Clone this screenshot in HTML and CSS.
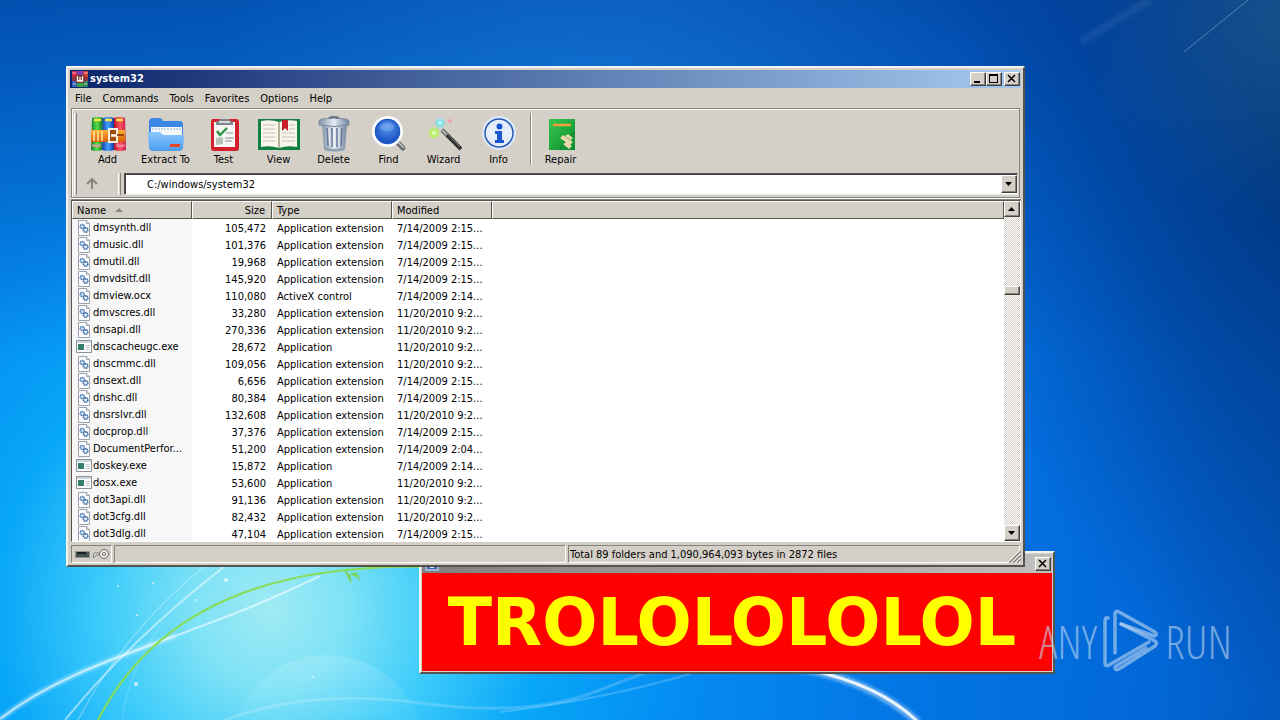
FILE: index.html
```html
<!DOCTYPE html>
<html lang="en">
<head>
<meta charset="utf-8">
<title>system32</title>
<link rel="stylesheet" href="styles.css">
</head>
<body>
<svg class="sprites" width="0" height="0" aria-hidden="true">
  <symbol id="dll" viewBox="0 0 16 16">
    <path d="M2.500 .5h8l3 3v12h-11z" fill="#fdfdfe" stroke="#9aa3ad"/>
    <path d="M10.500 .5v3h3" fill="#dfe5ec" stroke="#9aa3ad"/>
    <circle cx="6.300" cy="6.500" r="2" fill="#e4f0fc" stroke="#4a78b4" stroke-width="1.600" stroke-dasharray="1.200 .4"/>
    <circle cx="9.600" cy="10" r="2.200" fill="#e4f0fc" stroke="#3d68a4" stroke-width="1.600" stroke-dasharray="1.300 .4"/>
  </symbol>
  <symbol id="exe" viewBox="0 0 16 16">
    <path d="M.5 1.500h15v12H.5z" fill="#fff" stroke="#8b949c"/>
    <path d="M1 2h14v2H1z" fill="#c9d5df"/>
    <path d="M2 5h6v6H2z" fill="#35806a"/>
    <path d="M9.500 6.500h4M9.500 8.500h4M9.500 10.500h4" stroke="#b9c6cc"/>
  </symbol>
  <symbol id="rar" viewBox="0 0 36 36">
    <defs>
      <linearGradient id="bg"><stop offset="0" stop-color="#0c7d2c"/><stop offset=".5" stop-color="#5be04c"/><stop offset="1" stop-color="#0b6a2a"/></linearGradient>
      <linearGradient id="bb"><stop offset="0" stop-color="#103fb0"/><stop offset=".5" stop-color="#48a4ff"/><stop offset="1" stop-color="#1238a0"/></linearGradient>
      <linearGradient id="br"><stop offset="0" stop-color="#b80f24"/><stop offset=".5" stop-color="#ff5a60"/><stop offset="1" stop-color="#c8184c"/></linearGradient>
      <linearGradient id="belt" x2="0" y2="1"><stop offset="0" stop-color="#ffb030"/><stop offset="1" stop-color="#d85c08"/></linearGradient>
    </defs>
    <path d="M2 2q5-2 11 0l-1 32q-6 2-11 0z" fill="url(#bg)"/>
    <path d="M13 2q5-2 11 0v32q-6 2-12 0z" fill="url(#bb)"/>
    <path d="M24 2q5-2 11 0l1 32q-6 2-12 0z" fill="url(#br)"/>
    <path d="M4 4h7M15 4h7M26 4h7" stroke="#ffe14a" stroke-width="2.500"/>
    <path d="M2 29q5 2 9 0M26 29q5 2 9 0" fill="none" stroke="#ff9ac0" stroke-width="3" opacity=".6"/>
    <path d="M1 14h34v12H1z" fill="url(#belt)"/>
    <path d="M4 15v10M8 15v10M12 15v10" stroke="#ffe9a8" stroke-width="1.500"/>
    <path d="M19 13h8v13h-8z" fill="#a04e10" stroke="#f6f0e0" stroke-width="2"/>
    <path d="M21 19.500h5" stroke="#fff" stroke-width="2.500"/><path d="M27 19h7" stroke="#7a2c04" stroke-width="1.500"/>
  </symbol>
</svg>

<main class="desktop">
  <svg class="wallpaper" viewBox="0 0 1280 720" preserveAspectRatio="xMidYMid slice" aria-hidden="true">
    <defs>
      <radialGradient id="sky" gradientUnits="userSpaceOnUse" cx="270" cy="610" r="1100">
        <stop offset="0" stop-color="#a0eaf4"/><stop offset=".07" stop-color="#7ee2f6"/><stop offset=".15" stop-color="#3eccfa"/>
        <stop offset=".25" stop-color="#08a6f8"/><stop offset=".4" stop-color="#0489f1"/><stop offset=".6" stop-color="#0374e3"/>
        <stop offset=".8" stop-color="#0268d8"/><stop offset="1" stop-color="#034fb0"/>
      </radialGradient>
      <linearGradient id="shade" x2="0" y2="1">
        <stop offset="0" stop-color="#02388f" stop-opacity=".6"/><stop offset=".5" stop-color="#02388f" stop-opacity="0"/>
      </linearGradient>
      <radialGradient id="glow" gradientUnits="userSpaceOnUse" cx="600" cy="130" r="400">
        <stop offset="0" stop-color="#2492f0" stop-opacity=".4"/><stop offset="1" stop-color="#2492f0" stop-opacity="0"/>
      </radialGradient>
      <radialGradient id="corner" gradientUnits="userSpaceOnUse" cx="0" cy="0" r="1" gradientTransform="translate(1310 140) scale(340 560)">
        <stop offset="0" stop-color="#003272" stop-opacity=".8"/><stop offset=".5" stop-color="#003a8c" stop-opacity=".55"/><stop offset="1" stop-color="#003a8c" stop-opacity="0"/>
      </radialGradient>
      <radialGradient id="haze" gradientUnits="userSpaceOnUse" cx="1280" cy="20" r="200">
        <stop offset="0" stop-color="#3c7890" stop-opacity=".35"/><stop offset="1" stop-color="#3c7890" stop-opacity="0"/>
      </radialGradient>
      <linearGradient id="disc" x2="0" y2="1">
        <stop offset="0" stop-color="#fff" stop-opacity=".15"/><stop offset=".4" stop-color="#fff" stop-opacity="0"/>
      </linearGradient>
      <filter id="soft"><feGaussianBlur stdDeviation="1.500"/></filter>
    </defs>
    <path d="M0 0h1280v720H0z" fill="url(#sky)"/>
    <path d="M0 0h1280v720H0z" fill="url(#shade)"/>
    <path d="M0 0h1280v720H0z" fill="url(#glow)"/>
    <path d="M0 0h1280v720H0z" fill="url(#corner)"/>
    <path d="M0 0h1280v720H0z" fill="url(#haze)"/>
    <circle cx="327" cy="752" r="97" fill="url(#disc)"/>
    <g fill="none" stroke="#fff">
      <path d="M0 719C50 680 110 660 175 636" stroke-width="5" opacity=".4" filter="url(#soft)"/>
      <path d="M0 719C50 680 110 660 175 636S270 600 320 576" stroke-width="2" opacity=".55"/>
      <path d="M65 720Q130 640 225 566" stroke-width="2" opacity=".5"/>
      <path d="M78 720Q125 630 205 566" opacity=".45"/>
      <path d="M122 720Q130 665 165 620" opacity=".2"/>
      <path d="M225 720Q310 688 420 703T600 690T660 672" stroke-width="3" opacity=".18"/>
      <path d="M500 712Q600 700 690 674" stroke-width="2" opacity=".2"/>
      <path d="M800 668Q870 680 918 722" stroke-width="8" opacity=".4" filter="url(#soft)"/>
      <path d="M810 670Q880 685 918 722" stroke-width="3" opacity=".85"/>
      <path d="M1248 0L1184 52" opacity=".3"/>
      <path d="M1150 0L1080 42" stroke-width="8" opacity=".06" filter="url(#soft)"/>
    </g>
    <path d="M98 720Q180 560 430 567" fill="none" stroke="#88dc58" stroke-width="2"/>
    <path d="M345 571l6 12-1-8zM352 573l8 7-3-5zM351 574l7-1-4 3z" fill="#7cd45c" stroke="#7cd45c"/>
    <g fill="#fff" opacity=".7"><circle cx="226" cy="580" r="2"/><circle cx="136" cy="684" r="2"/><circle cx="118" cy="586" r="1"/><circle cx="153" cy="583" r="1"/><circle cx="137" cy="615" r="1"/><circle cx="313" cy="677" r="1"/><circle cx="196" cy="600" r="1"/></g>
  </svg>

  <section class="window popup" aria-label="Message">
    <header class="titlebar inactive">
      <svg class="title-icon" viewBox="0 0 16 16" aria-hidden="true"><path d="M1 1h14v14H1z" fill="#9fb4d4"/><path d="M3 4h10v9H3z" fill="#4468b0"/><path d="M6 9h4v3H6z" fill="#dce6f4"/></svg>
      <button class="caption close" aria-label="Close message"><svg viewBox="0 0 12 10"><path d="M2 1l7 7M9 1L2 8" stroke="#000" stroke-width="1.500"/></svg></button>
    </header>
    <p class="shout">TROLOLOLOLOL</p>
  </section>

  <section class="window archive" aria-label="system32">
    <header class="titlebar">
      <svg class="title-icon" viewBox="0 0 16 16" aria-hidden="true">
        <path d="M0 0h5v16H0z" fill="#d02848"/><path d="M5 0h6v16H5z" fill="#7a3cb8"/><path d="M11 0h5v16h-5z" fill="#c8402c"/>
        <path d="M0 9h5v7H0z" fill="#2a62c0"/><path d="M5 10h6v6H5z" fill="#38a048"/><path d="M11 9h5v7h-5z" fill="#28885a"/>
        <path d="M0 2h4M12 2h4M1 13h3M12 13h3" stroke="#f0b8c8"/><path d="M0 6h16v4H0z" fill="#8c3440"/>
        <path d="M4 4h8v8H4z" fill="#783020"/><path d="M5.500 5v5h5V5M8 6v4" fill="none" stroke="#fff" stroke-width="1.300"/>
      </svg>
      <h1 class="title">system32</h1>
      <button class="caption" aria-label="Minimize"><svg viewBox="0 0 12 10"><path d="M2 7h6v2H2z"/></svg></button>
      <button class="caption" aria-label="Maximize"><svg viewBox="0 0 12 10"><path d="M1 0h9v9H1zM2 2v6h7V2z" fill-rule="evenodd"/></svg></button>
      <button class="caption close" aria-label="Close"><svg viewBox="0 0 12 10"><path d="M2 1l7 7M9 1L2 8" stroke="#000" stroke-width="1.500"/></svg></button>
    </header>
    <nav class="menu" aria-label="Menu">
      <button>File</button><button>Commands</button><button>Tools</button><button>Favorites</button><button>Options</button><button>Help</button>
    </nav>

    <div class="bars">
      <div class="toolbar" role="toolbar" aria-label="Archive tools">
        <span class="grip"></span>
        <button class="tool"><svg viewBox="0 0 36 36"><use href="#rar"/></svg>Add</button>
        <button class="tool wide"><svg viewBox="0 0 36 36">
          <defs><linearGradient id="fold" x2="0" y2="1"><stop offset="0" stop-color="#8cc8ff"/><stop offset="1" stop-color="#4a9cf0"/></linearGradient></defs>
          <path d="M1 18V6q0-4 4-4h6q3 0 4 3h17q3 0 3 4v12z" fill="#3b86e6"/>
          <path d="M3 11h31v12H3z" fill="#f4f8fc"/><path d="M5 12v2M8 12v2M11 12v2M14 12v2M17 12v2M20 12v2M23 12v2M26 12v2M29 12v2M32 12v2" stroke="#9ab4cc"/>
          <path d="M0 17q0-1 2-1h10q2 3 4 3h18q2 0 2 2l-1 11q-1 3-4 3H5q-3 0-4-3z" fill="url(#fold)"/><path d="M22 28h10v3H22z" fill="#e8442a"/></svg>Extract To</button>
        <button class="tool"><svg viewBox="0 0 36 36">
          <path d="M6 3h24q3 0 3 3v26q0 3-3 3H8q-3 0-3-3V5z" fill="#d3202f"/><path d="M8 6h21v25H8z" fill="#f6f6f4"/>
          <path d="M10 9V5q3 1 4-2h9q1 3 4 2v4z" fill="#83878c"/><path d="M13 6h11" stroke="#f0f0f0" stroke-width="1.500"/>
          <path d="M11 15l3 4 7-7" fill="none" stroke="#2c9440" stroke-width="2.400"/><path d="M10 22l7-1v7l-7 1z" fill="#b4c4b8"/>
          <path d="M20 17h7M19 22h9M19 25h7" stroke="#8c9398"/></svg>Test</button>
        <button class="tool"><svg class="broad" viewBox="0 0 42 36">
          <path d="M0 3h42v31H0z" fill="#118044"/><path d="M3 5q10-2 18 1v26q-9-3-18-1zM21 6q9-3 18-1v26q-9-2-18 1z" fill="#f8f5ea"/>
          <path d="M21 6v26" stroke="#b8b098" stroke-width="2"/><path d="M5 9h12M5 13h12M5 17h12M5 21h12M5 25h12M24 9h3M24 13h3M24 17h13M24 21h13M24 25h13M31 9h6M31 13h6" stroke="#c4c2ba"/>
          <path d="M24 4h6v11l-3-3-3 3z" fill="#c81e2e"/></svg>View</button>
        <button class="tool"><svg viewBox="0 0 36 36">
          <defs><linearGradient id="can"><stop offset="0" stop-color="#8193a8"/><stop offset=".5" stop-color="#e4ebf2"/><stop offset="1" stop-color="#71869f"/></linearGradient></defs>
          <path d="M6 8h25l-2 25q-11 3-21 0z" fill="url(#can)"/><path d="M11 12l1 18M16 12v19M21 12v19M26 12l-1 18" stroke="#66799a" stroke-width="1.500"/><path d="M13 12l1 18M18 12v19M23 12v19" stroke="#fff" opacity=".8"/>
          <path d="M3 5q1-2 4-2 11-2 22 0 3 0 4 2v4q-15 3-30 0z" fill="url(#can)" stroke="#7c8998"/><path d="M13 2q5-2 10 0" fill="none" stroke="#667485" stroke-width="2"/><path d="M8 31q10 4 21 0v3q-10 3-21 0z" fill="#8da0b4"/></svg>Delete</button>
        <button class="tool"><svg viewBox="0 0 36 36">
          <defs><radialGradient id="lens" cy=".35"><stop offset="0" stop-color="#5c98ee"/><stop offset="1" stop-color="#1c54c4"/></radialGradient></defs>
          <path d="M25 25l7 7" stroke="#676b70" stroke-width="5" stroke-linecap="round"/><path d="M25 24l8 8" stroke="#c5c8ca" stroke-width="1.500"/>
          <circle cx="16.500" cy="15.500" r="14" fill="url(#lens)" stroke="#fafcff" stroke-width="3"/><circle cx="16.500" cy="15.500" r="12" fill="none" stroke="#235bc6" stroke-width="1.500"/><ellipse cx="16" cy="11" rx="7" ry="4" fill="#9cc9ff" opacity=".35"/></svg>Find</button>
        <button class="tool"><svg viewBox="0 0 36 36">
          <defs><radialGradient id="gg"><stop offset="0" stop-color="#fff"/><stop offset=".4" stop-color="#b4f25c"/><stop offset="1" stop-color="#b4f25c" stop-opacity="0"/></radialGradient><radialGradient id="gc"><stop offset="0" stop-color="#fff"/><stop offset=".4" stop-color="#72e5ee"/><stop offset="1" stop-color="#72e5ee" stop-opacity="0"/></radialGradient></defs>
          <circle cx="8" cy="17" r="7" fill="url(#gg)"/><circle cx="14" cy="7" r="6" fill="url(#gc)"/><circle cx="24" cy="5" r="2" fill="#f39aa4" opacity=".8"/>
          <path d="M16 14l19 19" stroke="#2e2e30" stroke-width="4"/><path d="M16 14l5 5" stroke="#a4a6aa" stroke-width="3"/><path d="M22 19l12 12" stroke="#777"/></svg>Wizard</button>
        <button class="tool"><svg viewBox="0 0 36 36">
          <circle cx="18" cy="17" r="17" fill="#dfe8f8"/><circle cx="18" cy="17" r="14" fill="#e6eefc" stroke="#285bb4" stroke-width="1.500"/><circle cx="18.500" cy="10.500" r="3" fill="#1d57d0"/><path d="M14 15h7v9h2v3h-9v-3h2v-6h-2z" fill="#1d57d0"/></svg>Info</button>
        <span class="divider"></span>
        <button class="tool"><svg viewBox="0 0 36 36">
          <defs><linearGradient id="rep" x2="1" y2="1"><stop offset="0" stop-color="#38c750"/><stop offset="1" stop-color="#0b8c2c"/></linearGradient></defs>
          <path d="M6 3h26v31H6z" fill="url(#rep)"/><path d="M10 9h18" stroke="#f5a03c" stroke-width="2.500"/><path d="M32 16q-9 6-15 18" fill="none" stroke="#087426"/>
          <path d="M17 22l3-3 10 7-3 3zM20 28l3-2 6 4-3 3zM22 20l3-2 5 4-2 2z" fill="#e8d8ac"/></svg>Repair</button>
      </div>
      <div class="address">
        <span class="grip"></span>
        <button class="up" aria-label="Up one level"><svg viewBox="0 0 14 12"><path d="M7 11V2M2 6l5-5 5 5" fill="none" stroke="#85837e" stroke-width="2"/></svg></button>
        <span class="grip"></span>
        <div class="combo">
          <input type="text" value="C:/windows/system32" aria-label="Address">
          <button class="bevel" aria-label="Show locations"><svg viewBox="0 0 8 5"><path d="M0 0h7L3.500 4z"/></svg></button>
        </div>
      </div>
    </div>

    <div class="list">
      <div class="files">
        <table>
          <colgroup><col class="c-name"><col class="c-size"><col class="c-type"><col class="c-date"><col></colgroup>
          <thead><tr><th>Name <svg class="sort" viewBox="0 0 8 4"><path d="M0 4l4-4 4 4z" fill="#8c8982"/></svg></th><th class="num">Size</th><th>Type</th><th>Modified</th><th></th></tr></thead>
          <tbody>
            <tr><td><svg><use href="#dll"/></svg>dmsynth.dll</td><td>105,472</td><td>Application extension</td><td>7/14/2009 2:15...</td><td></td></tr>
            <tr><td><svg><use href="#dll"/></svg>dmusic.dll</td><td>101,376</td><td>Application extension</td><td>7/14/2009 2:15...</td><td></td></tr>
            <tr><td><svg><use href="#dll"/></svg>dmutil.dll</td><td>19,968</td><td>Application extension</td><td>7/14/2009 2:15...</td><td></td></tr>
            <tr><td><svg><use href="#dll"/></svg>dmvdsitf.dll</td><td>145,920</td><td>Application extension</td><td>7/14/2009 2:15...</td><td></td></tr>
            <tr><td><svg><use href="#dll"/></svg>dmview.ocx</td><td>110,080</td><td>ActiveX control</td><td>7/14/2009 2:14...</td><td></td></tr>
            <tr><td><svg><use href="#dll"/></svg>dmvscres.dll</td><td>33,280</td><td>Application extension</td><td>11/20/2010 9:2...</td><td></td></tr>
            <tr><td><svg><use href="#dll"/></svg>dnsapi.dll</td><td>270,336</td><td>Application extension</td><td>11/20/2010 9:2...</td><td></td></tr>
            <tr><td><svg><use href="#exe"/></svg>dnscacheugc.exe</td><td>28,672</td><td>Application</td><td>11/20/2010 9:2...</td><td></td></tr>
            <tr><td><svg><use href="#dll"/></svg>dnscmmc.dll</td><td>109,056</td><td>Application extension</td><td>11/20/2010 9:2...</td><td></td></tr>
            <tr><td><svg><use href="#dll"/></svg>dnsext.dll</td><td>6,656</td><td>Application extension</td><td>7/14/2009 2:15...</td><td></td></tr>
            <tr><td><svg><use href="#dll"/></svg>dnshc.dll</td><td>80,384</td><td>Application extension</td><td>7/14/2009 2:15...</td><td></td></tr>
            <tr><td><svg><use href="#dll"/></svg>dnsrslvr.dll</td><td>132,608</td><td>Application extension</td><td>11/20/2010 9:2...</td><td></td></tr>
            <tr><td><svg><use href="#dll"/></svg>docprop.dll</td><td>37,376</td><td>Application extension</td><td>7/14/2009 2:15...</td><td></td></tr>
            <tr><td><svg><use href="#dll"/></svg>DocumentPerfor...</td><td>51,200</td><td>Application extension</td><td>7/14/2009 2:04...</td><td></td></tr>
            <tr><td><svg><use href="#exe"/></svg>doskey.exe</td><td>15,872</td><td>Application</td><td>7/14/2009 2:14...</td><td></td></tr>
            <tr><td><svg><use href="#exe"/></svg>dosx.exe</td><td>53,600</td><td>Application</td><td>11/20/2010 9:2...</td><td></td></tr>
            <tr><td><svg><use href="#dll"/></svg>dot3api.dll</td><td>91,136</td><td>Application extension</td><td>11/20/2010 9:2...</td><td></td></tr>
            <tr><td><svg><use href="#dll"/></svg>dot3cfg.dll</td><td>82,432</td><td>Application extension</td><td>11/20/2010 9:2...</td><td></td></tr>
            <tr><td><svg><use href="#dll"/></svg>dot3dlg.dll</td><td>47,104</td><td>Application extension</td><td>7/14/2009 2:15...</td><td></td></tr>
          </tbody>
        </table>
      </div>
      <div class="scroll">
        <button class="bevel arrow" aria-label="Scroll up"><svg viewBox="0 0 8 5"><path d="M0 4h7L3.500 0z"/></svg></button>
        <span class="track-above"></span><span class="thumb bevel"></span><span class="track-below"></span>
        <button class="bevel arrow" aria-label="Scroll down"><svg viewBox="0 0 8 5"><path d="M0 0h7L3.500 4z"/></svg></button>
      </div>
    </div>

    <footer class="status">
      <span class="pane marks">
        <svg viewBox="0 0 34 12"><path d="M.5 3.500h14v6H.5z" fill="#46524f" stroke="#8f9694"/><path d="M2 5h9" stroke="#1b2321" stroke-width="2"/><path d="M19 5h8v2h-6l-1 2h-2z" fill="#f2f2f0" stroke="#77756f"/><circle cx="29" cy="6" r="4.500" fill="#e8e8e6" stroke="#6d6b66"/><circle cx="29" cy="6" r="1.500" fill="#fff" stroke="#6d6b66"/></svg>
      </span>
      <span class="pane"></span>
      <span class="pane">Total 89 folders and 1,090,964,093 bytes in 2872 files</span>
      <svg class="resize" viewBox="0 0 14 14" aria-hidden="true"><path d="M2 14L14 2M6 14l8-8M10 14l4-4" stroke="#85837e" stroke-width="1.500"/><path d="M1 13L13 1M5 13l8-8M9 13l4-4" stroke="#fff"/></svg>
    </footer>
  </section>

  <div class="watermark">
    <span>ANY</span>
    <svg viewBox="0 0 58 64" aria-hidden="true"><g fill="none" stroke="currentColor" stroke-width="3.500" stroke-linejoin="round" stroke-linecap="round"><path d="M6 9q-3-1-3 3v42q0 4 4 2l40-23"/><path d="M13 44V5q0-4 4-2l36 20q3 3-1 4L19 15"/><path d="M19 15l34 17q3 2 0 5L17 60q-4 2-4-2l1-1 30-18"/></g></svg>
    <span>RUN</span>
  </div>
</main>
</body>
</html>
```
FILE: styles.css
```css
* { box-sizing: border-box; }
body { margin: 0; font: 11px/13px "DejaVu Sans Condensed", "DejaVu Sans", sans-serif; color: #000; }
button { border: 0; padding: 0; margin: 0; background: none; font: inherit; color: inherit; }
.sprites { position: absolute; }

.desktop { position: relative; height: 100vh; min-height: 480px; overflow: hidden; background: #0374e3; }
.wallpaper { position: absolute; inset: 0; width: 100%; height: 100%; }

.window {
  position: absolute; display: flex; flex-direction: column; padding: 2px;
  background: #d4d0c8; border: 2px solid; border-color: #f4f2ee #55534e #55534e #f4f2ee;
}
.archive { inset: 66px 255px 153px 66px; }
.popup { inset: 551px 225px 46px 419px; padding: 1px; }

.titlebar { display: flex; align-items: center; flex: none; height: 18px; padding: 0 1px 0 2px; background: linear-gradient(90deg, #0a246a, #a6caf0); }
.inactive { background: linear-gradient(90deg, #808080, #c0c0c0); justify-content: space-between; height: 19px; }
.title-icon { width: 16px; height: 16px; margin-right: 2px; }
.title { flex: 1; margin: 0; font: bold 11px/16px "DejaVu Sans Condensed", "DejaVu Sans", sans-serif; color: #fff; }
.caption, .bevel {
  display: flex; align-items: center; justify-content: center; background: #d4d0c8;
  border: 1px solid; border-color: #fff #404040 #404040 #fff; box-shadow: inset -1px -1px #87847d;
}
.caption { width: 16px; height: 14px; }
.caption svg { width: 12px; height: 10px; }
.close { margin-left: 2px; }

.shout { flex: 1; display: flex; align-items: center; justify-content: center; margin: 0; padding: 2px 10px 0 0; background: #f00; color: #ff0; font: bold 65px/76px "DejaVu Sans", sans-serif; }

.menu { display: flex; gap: 11px; padding: 4px 5px 3px; line-height: 13px; }

.bars { margin: 0 1px; padding: 0 1px 2px 2px; border: 1px solid #85837e; box-shadow: inset 1px 1px #fff, 0 1px #fff; }
.toolbar { display: flex; padding-top: 4px; height: 64px; }
.grip { flex: none; width: 3px; margin-right: 3px; border-left: 1px solid #fff; border-right: 1px solid #85837e; }
.tool { display: flex; flex-direction: column; align-items: center; width: 55px; height: 56px; padding-top: 3px; line-height: 15px; }
.tool svg { width: 36px; height: 36px; }
.tool .broad { width: 42px; }
.wide { width: 61px; }
.divider { width: 2px; height: 52px; margin: 0 1px 0 4px; border-left: 1px solid #85837e; border-right: 1px solid #fff; }
.address { display: flex; height: 22px; }
.up { width: 22px; margin: 0 15px 0 1px; }
.up svg { width: 14px; height: 12px; display: block; margin: auto; }
.combo { display: flex; flex: 1; background: #fff; border: 1px solid; border-color: #55534e #e8e6e2 #e8e6e2 #55534e; box-shadow: inset 1px 1px #404040; }
.combo input { flex: 1; min-width: 0; border: 0; padding: 0 0 0 22px; background: none; font: inherit; }
.combo .bevel { width: 16px; margin: 1px 0 1px; }
.bevel svg { width: 8px; height: 5px; }

.list { flex: 1; min-height: 0; display: flex; margin: 2px 0 0 1px; border: 1px solid; border-color: #55534e #fff #fff #55534e; box-shadow: 0 -1px #85837e; background: #fff; }
.files { flex: 1; min-width: 0; overflow: hidden; background: linear-gradient(90deg, #f7f7f7 120px, #fff 120px); }
table { width: 100%; table-layout: fixed; border-collapse: separate; border-spacing: 0; }
.c-name, .c-type { width: 120px; }
.c-size { width: 80px; }
.c-date { width: 100px; }
th { height: 18px; padding: 1px 4px 0; background: #d4d0c8; border: 1px solid; border-color: #fff #55534e #55534e #fff; font-weight: normal; text-align: left; }
td { height: 17px; padding: 2px 5px 0; white-space: nowrap; overflow: hidden; }
th.num, td:nth-child(2) { text-align: right; padding-right: 6px; }
td:first-child { padding: 0 0 0 4px; }
td:nth-child(3), td:nth-child(4) { padding-right: 0; }
td svg { width: 16px; height: 16px; margin: 0 1px 0 0; vertical-align: bottom; }
td:first-child { line-height: 17px; }
.sort { width: 8px; height: 4px; margin: 0 0 2px 6px; }

.scroll { display: flex; flex-direction: column; flex: none; width: 16px; background: repeating-conic-gradient(#fff 0 25%, #d4d0c8 0 50%) 0 0 / 2px 2px; }
.arrow { height: 16px; }
.track-above { flex: 23; }
.track-below { flex: 77; }
.thumb { height: 9px; }

.status { display: flex; flex: none; gap: 2px; height: 21px; padding: 3px 1px 0; }
.pane { flex: 1; padding: 2px 1px; border: 1px solid; border-color: #85837e #fff #fff #85837e; white-space: nowrap; }
.marks { flex: none; width: 41px; padding: 2px 3px; }
.marks svg { display: block; width: 34px; height: 12px; }
.resize { position: absolute; right: 2px; bottom: 2px; width: 14px; height: 14px; }

.watermark { position: absolute; right: 48px; bottom: 47px; display: flex; align-items: center; gap: 5px; color: rgba(190, 215, 240, .6); font: 46px/64px "Noto Sans ExtraCondensed Light", "Open Sans Condensed Light", "Roboto Condensed Light", "Liberation Sans Narrow", sans-serif; }
.watermark svg { width: 58px; height: 64px; }
```
